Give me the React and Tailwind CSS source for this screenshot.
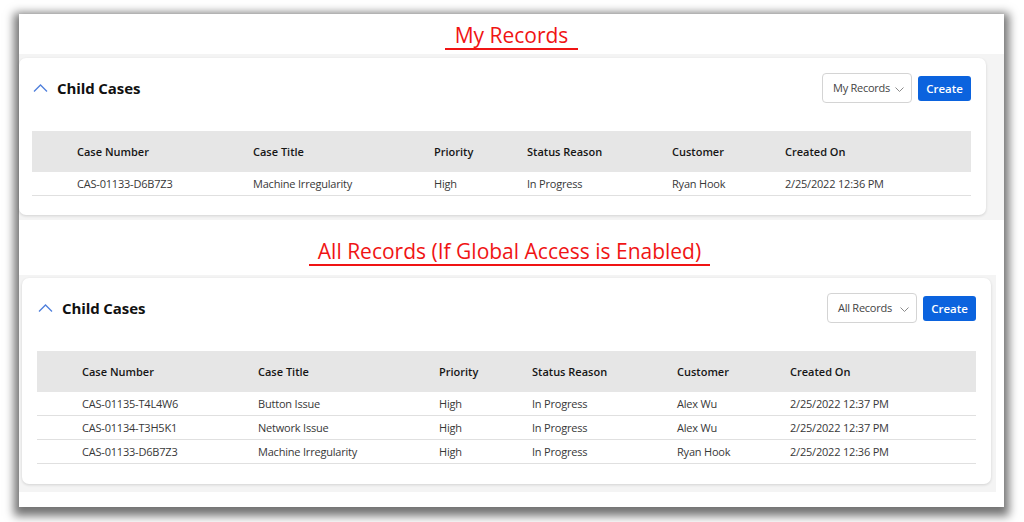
import React from "react";

const FONT = { fontFamily: '"Open Sans", "Noto Sans", sans-serif' };

function ChevronUp() {
  return (
    <svg width="15" height="8" viewBox="0 0 15 8" fill="none">
      <polyline points="1,7.5 7.5,1 14,7.5" stroke="#4f7fdc" strokeWidth="1.3" />
    </svg>
  );
}

function ChevronDown() {
  return (
    <svg width="9" height="5" viewBox="0 0 9 5" fill="none">
      <polyline points="0.5,0.5 4.5,4.5 8.5,0.5" stroke="#8a8a8a" strokeWidth="1" />
    </svg>
  );
}

const headers = ["Case Number", "Case Title", "Priority", "Status Reason", "Customer", "Created On"];

function Card({ view, rows, cardCls, padCls }) {
  return (
    <div className={`bg-white rounded-[7px] shadow-[0_1px_3px_rgba(0,0,0,0.14)] ${cardCls}`}>
      <div className={`pt-[15px] ${padCls}`}>
        <div className="flex items-center h-[30px]">
          <div className="flex items-center pl-[1px]">
            <ChevronUp />
            <span className="ml-[9px] text-[15px] font-bold text-[#111] leading-none tracking-[-0.1px]">Child Cases</span>
          </div>
          <div className="ml-auto flex items-center">
            <div className="h-[30px] w-[90px] border border-[#d4d4d4] rounded-[4px] flex items-center pl-[10px] pr-[7px] text-[11px] text-[#444] tracking-[-0.25px]">
              <span>{view}</span>
              <span className="ml-auto mt-[2px]"><ChevronDown /></span>
            </div>
            <div className="ml-[6px] h-[25px] w-[53px] bg-[#0b63de] rounded-[3px] flex items-center justify-center text-white text-[11.5px] font-semibold pt-[1px]">
              Create
            </div>
          </div>
        </div>
        <div className="mt-[28px]">
          <div className="h-[41px] pt-[2px] bg-[#e6e6e6] grid grid-cols-[176px_181px_93px_145px_113px_1fr] pl-[45px] items-center text-[11px] font-semibold text-[#161616]">
            {headers.map((h) => (
              <div key={h}>{h}</div>
            ))}
          </div>
          {rows.map((r, i) => (
            <div
              key={i}
              className="h-[24px] pt-[2px] border-b border-[#e0e0e0] grid grid-cols-[176px_181px_93px_145px_113px_1fr] pl-[45px] items-center text-[11px] text-[#383838] tracking-[-0.2px]"
            >
              {r.map((c, j) => (
                <div key={j}>{c}</div>
              ))}
            </div>
          ))}
        </div>
      </div>
    </div>
  );
}

export default function App() {
  const rows1 = [["CAS-01133-D6B7Z3", "Machine Irregularity", "High", "In Progress", "Ryan Hook", "2/25/2022 12:36 PM"]];
  const rows2 = [
    ["CAS-01135-T4L4W6", "Button Issue", "High", "In Progress", "Alex Wu", "2/25/2022 12:37 PM"],
    ["CAS-01134-T3H5K1", "Network Issue", "High", "In Progress", "Alex Wu", "2/25/2022 12:37 PM"],
    ["CAS-01133-D6B7Z3", "Machine Irregularity", "High", "In Progress", "Ryan Hook", "2/25/2022 12:36 PM"],
  ];
  return (
    <div className="w-[1024px] h-[522px] bg-white pl-[19px] pt-[14px] overflow-hidden" style={FONT}>
      <div className="w-[985px] h-[493px] bg-white shadow-[0_4px_9px_5px_rgba(0,0,0,0.55)] flex flex-col">
        {/* headline 1 */}
        <div className="h-[40px] flex justify-center pt-[11px]">
          <div className="border-b-2 border-[#f01414] px-[10px] pb-[2px] h-[25px] text-[21px] leading-[21px] text-[#f01414]">
            My Records
          </div>
        </div>
        {/* section 1 */}
        <div className="h-[166px] bg-[#f4f4f4] pt-[4px] pr-[7px]">
          <Card view="My Records" rows={rows1} cardCls="h-[157px] w-[967px]" padCls="pl-[13px] pr-[15px]" />
        </div>
        {/* headline 2 */}
        <div className="h-[55px] flex justify-center pt-[21px]">
          <div className="border-b-2 border-[#f01414] px-[9px] pb-[2px] h-[25px] text-[21px] leading-[21px] text-[#f01414] -translate-x-[2px]">
            All Records (If Global Access is Enabled)
          </div>
        </div>
        {/* section 2 */}
        <div className="h-[217px] w-[977px] bg-[#f4f4f4] pt-[3px] pl-[3px] pr-[5px]">
          <Card view="All Records" rows={rows2} cardCls="h-[206px] w-[969px]" padCls="pl-[15px] pr-[15px]" />
        </div>
      </div>
    </div>
  );
}
